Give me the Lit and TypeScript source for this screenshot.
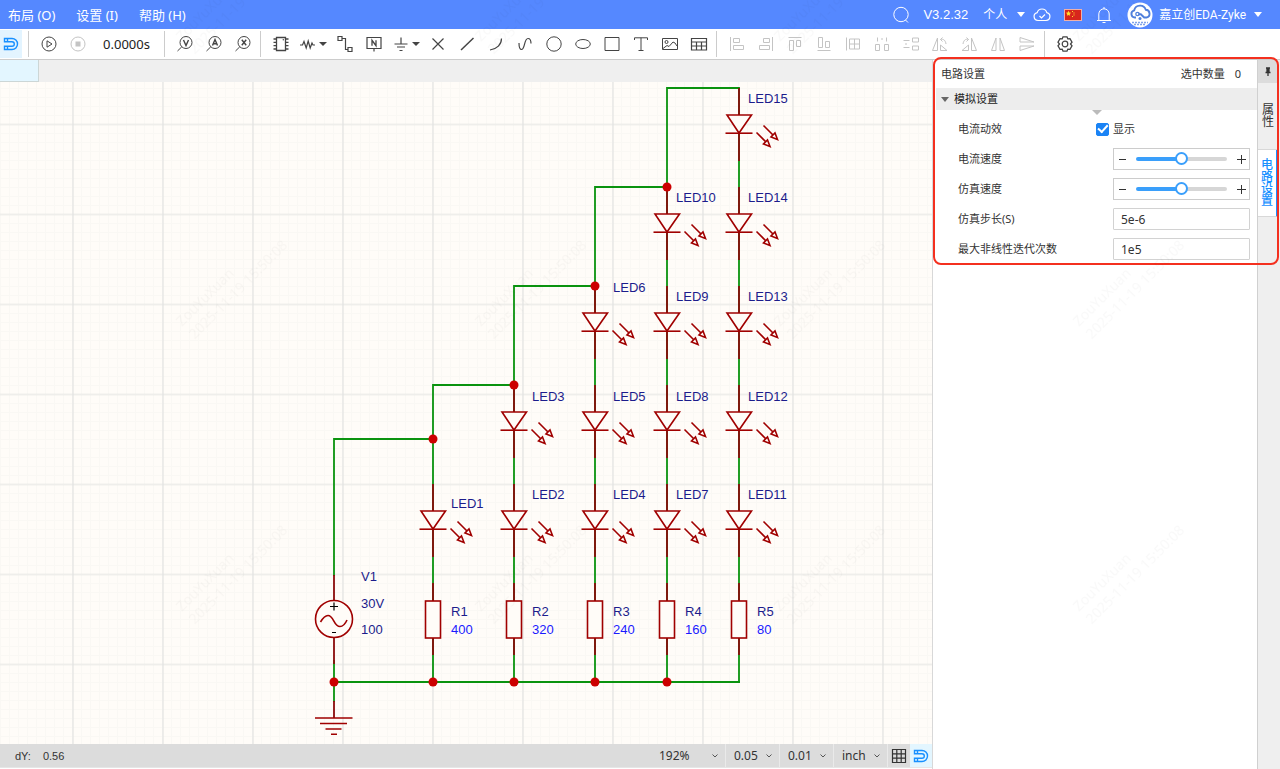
import { LitElement, html, svg, css } from "lit";
import { customElement, state } from "lit/decorators.js";
import { classMap } from "lit/directives/class-map.js";

/* ---------- icon set, drawn on a 20 x 20 grid ---------- */

const ICONS: Record<string, unknown> = {
  magnet: svg`<path d="M3.5 4.500h7.500a5.500 5.500 0 0 1 0 11h-7.500v-3.200h7.500a2.300 2.300 0 0 0 0-4.600h-7.500z M6.5 4.500v3.2 M6.5 12.3v3.2" stroke-width="1.4"/>`,
  play: svg`<circle cx="10" cy="10" r="7"/><path d="M8 6.8v6.4l5-3.2z"/>`,
  stop: svg`<circle cx="10" cy="10" r="7"/><rect x="7.5" y="7.5" width="5" height="5" fill="currentColor" stroke="none"/>`,
  probeV: svg`<circle cx="11" cy="8.5" r="6"/><path d="M6.8 12.8 2.5 17"/><path d="M8.5 6l2.5 5.5L13.5 6" stroke-width="1.4"/>`,
  probeA: svg`<circle cx="11" cy="8.5" r="6"/><path d="M6.8 12.8 2.5 17"/><path d="M8.5 11.5 11 5.5l2.5 6M9.4 9.7h3.2" stroke-width="1.4"/>`,
  probeX: svg`<circle cx="11" cy="8.5" r="6"/><path d="M6.8 12.8 2.5 17"/><path d="M8.8 5.8l4.4 5.5M13.2 5.8l-4.4 5.5" stroke-width="1.4"/>`,
  chip: svg`<path d="M5.5 3.5h9v13h-9z" stroke-width="1.3"/><circle cx="12.3" cy="5.8" r=".7" fill="currentColor" stroke="none"/><path d="M2.5 5h3M2.5 8.3h3M2.5 11.7h3M2.5 15h3M14.5 5h3M14.5 8.3h3M14.5 11.7h3M14.5 15h3" stroke-width="1.3"/>`,
  resistor: svg`<path d="M2 11h2.5l1.5-3.500 2.200 6.500 2-7 2 7 1.800-5 1 2h2" stroke-width="1.2"/>`,
  wire: svg`<path d="M3 2.5h4v4H3zM13 13.5h4v4h-4zM7 4.5h3.5v11H13" stroke-width="1.2"/>`,
  net: svg`<path d="M3 3.5h14v11H3zM10 14.500v3" stroke-width="1.2"/><path d="M8 11.700v-5.400l4 5.400v-5.400" stroke-width="1.300"/>`,
  ground: svg`<path d="M10 3.500v6M3.500 10h13M6 13h8M8.500 16.500h3" stroke-width="1.2"/>`,
  cross: svg`<path d="M4.5 4.5l11 11M15.5 4.5l-11 11" stroke-width="1.200"/>`,
  line: svg`<path d="M4 16 16.5 4" stroke-width="1.5"/>`,
  arc: svg`<path d="M15.5 4.5c0 6-4.500 10.500-11.500 11.500" stroke-width="1.200"/>`,
  curve: svg`<path d="M4 9c0 3.5.5 6.5 2.5 6.5C10 15.5 9 4.5 13 4.5c2 0 3 2 3 5" stroke-width="1.200"/>`,
  circle: svg`<circle cx="10" cy="10" r="7.200"/>`,
  ellipse: svg`<ellipse cx="10" cy="10" rx="7.300" ry="4.500"/>`,
  rect: svg`<path d="M3 3.500h14v13H3z"/>`,
  text: svg`<path d="M3.500 6V3.800h13V6M10 3.800v12.700M7.500 16.500h5"/>`,
  image: svg`<path d="M2.5 4.500h15v11h-15z"/><circle cx="6.5" cy="8" r="1.500"/><path d="M3 14.500l4-3 2 1 4-4.500 2 1 2 3"/>`,
  table: svg`<path d="M2.5 4.500h15v11.500h-15zM2.500 8h15M2.500 12h15M7.500 8v8M12.500 8v8" stroke-width="1.200"/>`,
  alignL: svg`<path d="M3.500 3v14M6.500 4.500h6v4h-6zM6.500 11.500h10v4h-10z"/>`,
  alignR: svg`<path d="M16.500 3v14M7.500 4.500h6v4h-6zM3.500 11.500h10v4h-10z"/>`,
  alignT: svg`<path d="M3.500 3.500h13M4.500 6.500h4v10h-4zM11.500 6.500h4v6h-4z"/>`,
  alignB: svg`<path d="M3.500 16.500h13M4.500 3.500h4v10h-4zM11.500 7.500h4v6h-4z"/>`,
  alignGrid: svg`<path d="M3.500 3.500v13M6.500 5h10v10h-10zM11.500 5v10M6.500 10h10"/>`,
  spreadH: svg`<path d="M5.500 3.500v4M14.500 3.500v4M3.500 10.500h4v6h-4zM12.500 10.500h4v6h-4zM10 4v2"/>`,
  spreadV: svg`<path d="M2.500 6.500h6M2.500 13.500h6M11.500 4h6v4h-6zM11.500 12h6v4h-6zM4 10h2"/>`,
  rotL: svg`<path d="M7.500 4v12.500h-5zM10.500 16.500V11l6.500 5.500zM10.500 5.500c3-1 5 1 5.500 4.500M12.500 3.500l-2 2 2 2"/>`,
  rotR: svg`<path d="M12.500 4v12.500h5zM9.500 16.500V11L3 16.500zM9.500 5.500c-3-1-5 1-5.500 4.500M7.500 3.500l2 2-2 2"/>`,
  flipH: svg`<path d="M8 4v12.500H3.500zM12 4v12.500h4.500z"/>`,
  flipV: svg`<path d="M3 8h14L3 3.500zM3 12h14L3 16.500z"/>`,
  gear: svg`<circle cx="10" cy="10" r="2.800" stroke-width="1.200"/><path d="M8 2.800h4l.8 2.100 2.200-.3 2 3.500-1.500 1.900 1.500 1.900-2 3.500-2.200-.3-.8 2.100H8l-.8-2.100-2.200.3-2-3.500L4.500 10 3 8.100l2-3.500 2.200.3z" stroke-width="1.300"/>`,
  search: svg`<circle cx="10" cy="9.500" r="7.200"/><path d="M14.500 15 17 17.500"/>`,
  cloud: svg`<path d="M6 15.500a4 4 0 0 1-.8-7.900 5 5 0 0 1 9.600 0A4 4 0 0 1 14 15.500zM7.500 11l2 2 3.500-3.500" stroke-width="1.200"/>`,
  bell: svg`<path d="M3 15.500h14M4.800 15.500V9a5.200 5.200 0 0 1 10.400 0v6.500M10 3.800V2M8.500 17.500h3"/>`,
  grid: svg`<path d="M3.500 3.500h13v13h-13zM3.500 7.800h13M3.500 12.200h13M7.800 3.500v13M12.200 3.500v13" stroke-width="1.200"/>`,
  pin: svg`<path d="M8 6h4M9 6v4M10 6v4M11 6v4M7.500 10.500h5M10 10.500v3.500" stroke-width="1.300"/>`,
};

const icon = (name: string) => html`
  <svg class="icon" viewBox="0 0 20 20" aria-hidden="true" fill="none" stroke="currentColor">${ICONS[name]}</svg>
`;

type Tool = { id: string; label: string; caret?: boolean };

const PROBES: Tool[] = [
  { id: "probeV", label: "电压探针" },
  { id: "probeA", label: "电流探针" },
  { id: "probeX", label: "探针" },
];

const DRAW: Tool[] = [
  { id: "chip", label: "器件" },
  { id: "resistor", label: "电阻", caret: true },
  { id: "wire", label: "导线" },
  { id: "net", label: "网络标签" },
  { id: "ground", label: "接地", caret: true },
  { id: "cross", label: "非连接标识" },
  { id: "line", label: "折线" },
  { id: "arc", label: "圆弧" },
  { id: "curve", label: "贝塞尔曲线" },
  { id: "circle", label: "圆形" },
  { id: "ellipse", label: "椭圆" },
  { id: "rect", label: "矩形" },
  { id: "text", label: "文本" },
  { id: "image", label: "图片" },
  { id: "table", label: "表格" },
];

const ARRANGE: Tool[] = [
  { id: "alignL", label: "左对齐" },
  { id: "alignR", label: "右对齐" },
  { id: "alignT", label: "顶部对齐" },
  { id: "alignB", label: "底部对齐" },
  { id: "alignGrid", label: "对齐格点" },
  { id: "spreadH", label: "水平等距" },
  { id: "spreadV", label: "垂直等距" },
  { id: "rotL", label: "左旋转" },
  { id: "rotR", label: "右旋转" },
  { id: "flipH", label: "水平翻转" },
  { id: "flipV", label: "垂直翻转" },
];

/* ---------- schematic ---------- */

type Led = { name: string; x: number; y: number; labelX: number; labelY: number };

const led = (name: string, x: number, y: number, labelX: number, labelY: number): Led => ({ name, x, y, labelX, labelY });

const LEDS: Led[] = [
  led("LED15", 739, 88, 748, 103),
  led("LED14", 739, 187, 748, 202),
  led("LED13", 739, 286, 748, 301),
  led("LED12", 739, 385, 748, 401),
  led("LED11", 739, 484, 748, 499),
  led("LED10", 667, 187, 676, 202),
  led("LED9", 667, 286, 676, 301),
  led("LED8", 667, 385, 676, 401),
  led("LED7", 667, 484, 676, 499),
  led("LED6", 595, 286, 613, 292),
  led("LED5", 595, 385, 613, 401),
  led("LED4", 595, 484, 613, 499),
  led("LED3", 514, 385, 532, 401),
  led("LED2", 514, 484, 532, 499),
  led("LED1", 433, 484, 451, 508),
];

const RESISTORS: [string, string, number][] = [
  ["R1", "400", 433],
  ["R2", "320", 514],
  ["R3", "240", 595],
  ["R4", "160", 667],
  ["R5", "80", 739],
];

const WIRES = [
  "M334 576V439H433V682",
  "M433 439V385H514V682",
  "M514 385V286H595V682",
  "M595 286V187H667V682",
  "M667 187V88H739V682",
  "M334 660V702M334 682H740",
];

const JUNCTIONS: [number, number][] = [
  [433, 439], [514, 385], [595, 286], [667, 187],
  [334, 682], [433, 682], [514, 682], [595, 682], [667, 682],
];

@customElement("eda-schematic")
class EdaSchematic extends LitElement {
  static styles = css`
    :host { display: block; min-width: 0; min-height: 0; overflow: hidden; background: #fffcf8; }
    .sheet { display: block; width: 100%; height: 100%; font: 13px "Liberation Sans", Arial, sans-serif; }
    .minor { stroke: #faf8f4; }
    .major { stroke: #e3e3e1; stroke-width: 1.2; }
    .wire { stroke: #0a930f; stroke-width: 1.8; fill: none; }
    .pin { stroke: #8a0c0c; stroke-width: 1.8; fill: none; }
    .body { stroke: #a00000; stroke-width: 1.6; fill: none; }
    .part { fill: #fffcf8; }
    .dot { fill: #cc0000; }
    .name { fill: #1c1c8c; }
    .value { fill: #1a1aff; }
    .sign { stroke: #000; stroke-width: 1.2; }
  `;

  private led({ name, x, y, labelX, labelY }: Led) {
    return svg`
      <g transform="translate(${x} ${y})">
        <path class="pin" d="M0 0V73"/>
        <path class="body part" d="M-12 27h24.500L0 45z"/>
        <path class="body" d="M-13.500 45.200h27"/>
        <path class="body" d="M17.500 44.500l10.500 10.500M24.500 37.500l10.500 10.500"/>
        <path class="body part" d="M31 58.500l-6.500-2.500 4-4zM38.500 51.500l-6.500-2.500 4-4z"/>
      </g>
      <text class="name" x=${labelX} y=${labelY}>${name}</text>`;
  }

  private resistor([name, value, x]: [string, string, number]) {
    return svg`
      <path class="pin" d="M${x} 583V655"/>
      <rect class="body part" x=${x - 7.5} y="601" width="15" height="37"/>
      <text class="name" x=${x + 18} y="616">${name}</text>
      <text class="value" x=${x + 18} y="634">${value}</text>`;
  }

  render() {
    return html`
      <svg class="sheet" role="img" aria-label="LED 电路原理图">
        <defs>
          <pattern id="minor" width="9" height="9" x="0" y="6" patternUnits="userSpaceOnUse">
            <path class="minor" d="M0.5 0V9M0 .5H9" />
          </pattern>
          <pattern id="major" width="90" height="90" x="72" y="41.5" patternUnits="userSpaceOnUse">
            <path class="major" d="M1 0V90M0 1H90" />
          </pattern>
        </defs>
        <rect width="100%" height="100%" fill="url(#minor)" />
        <rect width="100%" height="100%" fill="url(#major)" />
        <g transform="translate(0 -82)">
          ${WIRES.map((d) => svg`<path class="wire" d=${d}/>`)}
          ${LEDS.map((l) => this.led(l))}
          ${RESISTORS.map((r) => this.resistor(r))}
          <path class="pin" d="M334 575V600M334 638V664M334 701V718"/>
          <circle class="body part" cx="334" cy="619" r="18.500"/>
          <path class="body" d="M320.500 622c3-5 5-6.500 7.500-6.500 6 0 5.500 11 12 11 2.500 0 5-2 7-6.500"/>
          <path class="sign" d="M330 606.500h8M334 602.500v8M332 632.500h4"/>
          <path class="body" d="M315 718h37.500M320 723.500h27M325.500 729h16M331 734.200h6"/>
          <text class="name" x="361" y="581">V1</text>
          <text class="name" x="361" y="608">30V</text>
          <text class="name" x="361" y="634">100</text>
          ${JUNCTIONS.map(([x, y]) => svg`<circle class="dot" cx=${x} cy=${y} r="4.500"/>`)}
        </g>
      </svg>`;
  }
}

/* ---------- application shell ---------- */

@customElement("app-root")
class AppRoot extends LitElement {
  @state() private tab = 1;
  @state() private speeds = [50, 50];

  static styles = css`
    :host {
      display: flex; flex-direction: column; height: 100vh; position: relative; overflow: hidden;
      background: #fff; color: #333;
      font: 12px/16px "Noto Sans", "Noto Sans CJK SC", sans-serif;
    }
    * { box-sizing: border-box; }
    button, input, select { font: inherit; color: inherit; margin: 0; }
    button { display: inline-flex; align-items: center; justify-content: center; padding: 0; border: 0; background: none; }
    .icon { width: 20px; height: 20px; flex: none; display: block; }
    .caret { width: 0; height: 0; border: 4px solid transparent; border-top: 5px solid currentColor; border-bottom: 0; flex: none; }

    .header { flex: none; height: 29px; display: flex; align-items: center; justify-content: space-between; padding: 0 18px 0 8px; background: #5588ff; color: #fff; }
    .menu { display: flex; gap: 21px; font-size: 13px; }
    .menu button { white-space: nowrap; }
    .account { display: flex; align-items: center; font-family: "Liberation Sans", "Noto Sans CJK SC", sans-serif; }
    .version { font-size: 13px; margin: 0 15px 0 12px; }
    .team { gap: 10px; margin-right: 7px; }
    .cloud { margin-right: 12px; }
    .flag { width: 18px; height: 12px; display: block; margin-right: 12px; }
    .bell { margin-right: 13px; }
    .avatar { width: 26px; height: 26px; display: block; margin-right: 6px; }
    .user { gap: 8px; font-family: Roboto, "Noto Sans CJK SC", sans-serif; }

    .toolbar { flex: none; height: 31px; display: flex; align-items: center; border-bottom: 1px solid #ccc; background: #fff; color: #444; overflow: hidden; }
    .tool { width: 29px; height: 28px; flex: none; }
    .tool.wide { width: 35px; justify-content: flex-start; padding-left: 3px; gap: 1px; }
    .tool.wide .caret { border-width: 4px 4px 0; }
    .tool.snap { width: 22px; margin-right: 3px; background: #e3f4ff; color: #1890ff; }
    .tool.off { color: #c4c4c4; }
    .sep { width: 1px; height: 26px; flex: none; background: #ccc; margin: 0 5px 0 3px; }
    .time { width: 69px; flex: none; text-align: center; font-size: 13px; color: #222; }

    .main { flex: 1; min-height: 0; display: flex; }
    .work { flex: 1; min-width: 0; display: flex; flex-direction: column; padding-bottom: 1px; }
    .docs { flex: none; height: 22px; background: #efefef; }
    .doc { width: 39px; height: 22px; background: #e3f6ff; border: 1px solid #ccd6d6; border-width: 0 1px 1px 0; }
    .canvas { flex: 1; }

    .status { flex: none; height: 24px; display: flex; background: #dcdcdc; border-bottom: 1px solid #e6e6e6; }
    .coords { flex: 1; display: flex; align-items: center; gap: 12px; padding-left: 15px; font: 11px/16px "Liberation Sans", sans-serif; color: #333; }
    .pick { display: grid; align-items: center; border-right: 1px solid #eaeaea; width: 54px; }
    .pick.zoom { width: 75px; }
    .pick select { grid-area: 1 / 1; width: 100%; height: 100%; appearance: none; border: 0; background: none; padding: 0 0 0 8px; outline: 0; }
    .pick .chev { grid-area: 1 / 1; justify-self: end; margin-right: 6px; width: 8px; height: 8px; pointer-events: none; }
    .toggle { width: 22px; color: #333; }
    .toggle.on { background: #e3f6ff; color: #1890ff; }

    .side { flex: none; width: 348px; display: flex; position: relative; border-left: 1px solid #d8d8d8; background: #fff; }
    .panel { flex: 1; min-width: 0; padding-left: 3px; font-size: 11px; }
    .titlebar { height: 28px; display: flex; align-items: center; justify-content: space-between; padding: 0 16px 0 5px; }
    .count { display: flex; gap: 10px; }
    .section { display: flex; align-items: center; justify-content: flex-start; gap: 5px; width: 100%; height: 22px; padding-left: 5px; background: #ededed; color: #222; }
    .section .caret { color: #666; }
    .notch { width: 10px; height: 5px; border: 5px solid transparent; border-top-color: #bbb; border-bottom: 0; margin: 0 auto -1px; }
    .row { height: 30px; display: grid; grid-template-columns: 1fr 137px; align-items: center; padding: 0 7px 0 22px; }
    .row.first { grid-template-columns: 1fr 154px; }
    .check { display: flex; align-items: center; gap: 4px; }
    .tick { appearance: none; width: 13px; height: 13px; border-radius: 2px; border: 1px solid #999; display: grid; place-items: center; }
    .tick:checked { background: #1a83f5; border-color: #1a83f5; }
    .tick:checked::after { content: ""; width: 4px; height: 8px; border: solid #fff; border-width: 0 2px 2px 0; transform: rotate(42deg) translate(-1px, -1px); }
    .field { width: 100%; height: 22px; border: 1px solid #d2d2d2; border-radius: 1px; padding: 0 7px; background: #fff; font-size: 12px; outline: 0; }
    .stepper { display: flex; align-items: center; height: 22px; border: 1px solid #ccc; }
    .stepper button { width: 16px; height: 20px; flex: none; }
    .sign { width: 9px; height: 9px; stroke: #333; }
    .slider { flex: 1; min-width: 0; appearance: none; height: 14px; background: none; margin: 0 6px; }
    .slider::-webkit-slider-runnable-track { height: 4px; border-radius: 2px; background: linear-gradient(90deg, #3a9ffb 50%, #d6d6d6 50%); }
    .slider::-webkit-slider-thumb { appearance: none; width: 13px; height: 13px; margin-top: -5px; border-radius: 50%; border: 2px solid #3a9ffb; background: #fff; }

    .tabs { flex: none; width: 23px; display: flex; flex-direction: column; background: #efefef; border-left: 1px solid #d0d0d0; padding-right: 2px; }
    .pinbtn { height: 23px; background: #dcdcdc; }
    .tab { height: 67px; border-bottom: 1px solid #d8d8d8; color: #333; }
    .tab span { width: 12px; line-height: 12px; word-break: break-all; }
    .tab.active { background: #fff; color: #1890ff; font-weight: 500; border-right: 2px solid #1890ff; }
    .callout { position: absolute; left: 0; right: 1px; top: -3px; height: 208px; border: 2px solid #f4301f; border-radius: 8px; pointer-events: none; }
    .watermark { position: absolute; inset: 0; width: 100%; height: 100%; pointer-events: none; }
    .mark { fill: #000; fill-opacity: 0.025; font-size: 14px; }
  `;

  private tool(t: Tool, off = false) {
    return html`<button class=${classMap({ tool: true, wide: !!t.caret, off })} aria-label=${t.label}>
      ${icon(t.id)}${t.caret ? html`<span class="caret"></span>` : ""}
    </button>`;
  }

  private pick(label: string, value: string, zoom = false) {
    return html`<span class=${classMap({ pick: true, zoom })}>
      <select aria-label=${label}><option>${value}</option></select>
      <svg class="chev" viewBox="0 0 8 8" fill="none" stroke="#555"><path d="M1.5 2.5 4 5l2.500-2.500"/></svg>
    </span>`;
  }

  private setSpeed(i: number, v: number) {
    this.speeds = this.speeds.map((s, n) => (n === i ? Math.max(0, Math.min(100, v)) : s));
  }

  private sliderRow(i: number, label: string) {
    const v = this.speeds[i];
    return html`<div class="row">
      <label for="speed${i}">${label}</label>
      <div class="stepper">
        <button aria-label="减小${label}" @click=${() => this.setSpeed(i, v - 10)}>
          <svg class="sign" viewBox="0 0 9 9"><path d="M1 4.5h7"/></svg>
        </button>
        <input class="slider" id="speed${i}" type="range" min="0" max="100" .value=${String(v)}
          @input=${(e: Event) => this.setSpeed(i, Number((e.target as HTMLInputElement).value))} />
        <button aria-label="增大${label}" @click=${() => this.setSpeed(i, v + 10)}>
          <svg class="sign" viewBox="0 0 9 9"><path d="M0 4.5h9M4.5 0v9"/></svg>
        </button>
      </div>
    </div>`;
  }

  render() {
    return html`
      <header class="header">
        <nav class="menu">
          <button>布局 (O)</button><button>设置 (I)</button><button>帮助 (H)</button>
        </nav>
        <div class="account">
          <button aria-label="搜索">${icon("search")}</button>
          <span class="version">V3.2.32</span>
          <button class="team">个人<span class="caret"></span></button>
          <button class="cloud" aria-label="云同步">${icon("cloud")}</button>
          <svg class="flag" viewBox="0 0 18 12" aria-hidden="true">
            <rect width="18" height="12" fill="#d8261c"/>
            <rect x=".5" y=".5" width="17" height="11" fill="none" stroke="#f0b0a8"/>
            <path d="M4.5 1.800l.8 1.700 1.800.2-1.300 1.200.3 1.900-1.600-.9-1.600.9.3-1.900-1.300-1.200 1.800-.2z" fill="#ffde2e"/>
            <path d="M8 2h1v1H8zM9.500 3.500h1v1h-1zM9.500 5.500h1v1h-1zM8 7h1v1H8z" fill="#ffde2e"/>
          </svg>
          <button class="bell" aria-label="通知">${icon("bell")}</button>
          <svg class="avatar" viewBox="0 0 26 26" aria-hidden="true">
            <circle cx="13" cy="13" r="12.500" fill="#fff"/>
            <path d="M9 15.500H7.800a3.600 3.600 0 0 1-.6-7.100 6 6 0 0 1 11.600-.6 3.900 3.900 0 0 1 .7 7.700h-2.300l-3.400-3.200h-2.500" fill="none" stroke="#4f7fdc" stroke-width="1.900"/>
            <circle cx="10.500" cy="12" r="1.700" fill="none" stroke="#4f7fdc" stroke-width="1.300"/>
            <circle cx="13" cy="16.500" r="1.500" fill="#4f7fdc"/>
            <path d="M5 20.500h16M7 22.500h12" stroke="#7fa3ea" stroke-width="1.300" stroke-dasharray="2 1"/>
          </svg>
          <button class="user">嘉立创EDA-Zyke<span class="caret"></span></button>
        </div>
      </header>

      <div class="toolbar" role="toolbar">
        <button class="tool snap" aria-label="吸附">${icon("magnet")}</button>
        <span class="sep"></span>
        <button class="tool" aria-label="开始仿真">${icon("play")}</button>
        <button class="tool off" aria-label="停止仿真">${icon("stop")}</button>
        <span class="time">0.0000s</span>
        <span class="sep"></span>
        ${PROBES.map((t) => this.tool(t))}
        <span class="sep"></span>
        ${DRAW.map((t) => this.tool(t))}
        <span class="sep"></span>
        ${ARRANGE.map((t) => this.tool(t, true))}
        <span class="sep"></span>
        <button class="tool" aria-label="设置">${icon("gear")}</button>
      </div>

      <div class="main">
        <main class="work">
          <div class="docs"><div class="doc"></div></div>
          <eda-schematic class="canvas"></eda-schematic>
          <footer class="status">
            <div class="coords"><span>dY:</span><span>0.56</span></div>
            ${this.pick("缩放", "192%", true)}
            ${this.pick("栅格", "0.05")}
            ${this.pick("步进", "0.01")}
            ${this.pick("单位", "inch")}
            <button class="toggle" aria-label="网格">${icon("grid")}</button>
            <button class="toggle on" aria-label="吸附">${icon("magnet")}</button>
          </footer>
        </main>

        <aside class="side">
          <section class="panel">
            <div class="titlebar">
              <span>电路设置</span>
              <span class="count"><span>选中数量</span><span>0</span></span>
            </div>
            <button class="section"><span class="caret"></span>模拟设置</button>
            <div class="notch"></div>
            <div class="row first">
              <span>电流动效</span>
              <label class="check"><input class="tick" type="checkbox" checked />显示</label>
            </div>
            ${this.sliderRow(0, "电流速度")}
            ${this.sliderRow(1, "仿真速度")}
            <div class="row">
              <label for="step">仿真步长(S)</label>
              <input class="field" id="step" type="text" value="5e-6" />
            </div>
            <div class="row">
              <label for="iter">最大非线性迭代次数</label>
              <input class="field" id="iter" type="text" value="1e5" />
            </div>
          </section>
          <nav class="tabs">
            <button class="pinbtn" aria-label="固定面板">${icon("pin")}</button>
            ${["属性", "电路设置"].map(
              (t, i) => html`<button class=${classMap({ tab: true, active: this.tab === i })} @click=${() => (this.tab = i)}><span>${t}</span></button>`
            )}
          </nav>
          <div class="callout"></div>
        </aside>
      </div>

      <svg class="watermark" aria-hidden="true">
        <defs>
          <pattern id="wm" x="100" y="90" width="299" height="285" patternUnits="userSpaceOnUse">
            <g class="mark" transform="translate(82 237) rotate(-45)">
              <text>ZouYuXuan</text>
              <text y="18">2025-11-19 15:50:08</text>
            </g>
          </pattern>
        </defs>
        <rect width="100%" height="100%" fill="url(#wm)" />
      </svg>
    `;
  }
}
